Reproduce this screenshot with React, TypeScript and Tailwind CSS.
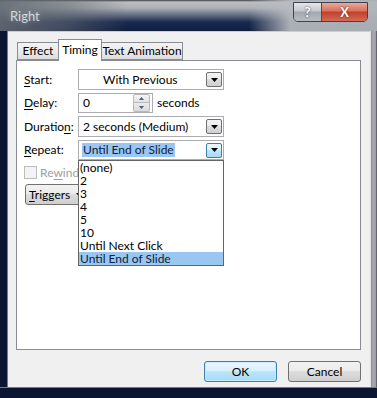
import React from "react";

function Arrow() {
  return (
    <svg width="7" height="4" viewBox="0 0 7 4">
      <path d="M0 0h7L3.5 4z" fill="#000" />
    </svg>
  );
}

function DropBtn({ active }: { active?: boolean }) {
  return active ? (
    <div className="ml-auto mr-[1px] w-[16px] h-[15px] border border-[#3c7fb1] rounded-[2px] bg-[linear-gradient(180deg,#eaf6fd_0%,#d9f0fc_45%,#bee6fd_50%,#a7d9f5_100%)] flex items-center justify-center">
      <Arrow />
    </div>
  ) : (
    <div className="ml-auto mr-[1px] w-[16px] h-[15px] border border-[#707070] rounded-[2px] bg-[linear-gradient(180deg,#f2f2f2_0%,#ebebeb_45%,#dddddd_50%,#cfcfcf_100%)] flex items-center justify-center">
      <Arrow />
    </div>
  );
}

const items = ["(none)", "2", "3", "4", "5", "10", "Until Next Click", "Until End of Slide"];

export default function App() {
  return (
    <div className="w-[377px] h-[398px] flex flex-col bg-[#0c1531] overflow-hidden font-['Lato',sans-serif] text-[12px] text-black select-none">
      {/* Title bar */}
      <div className="h-[31px] shrink-0 flex items-start justify-between bg-[linear-gradient(90deg,rgba(100,106,114,0.9)_0%,rgba(100,106,114,0.55)_18%,rgba(100,106,114,0)_34%,rgba(150,155,162,0)_66%,rgba(184,188,193,0.92)_77%,rgba(176,181,186,0.95)_100%),linear-gradient(180deg,#3a3d42_0px,#bcc0c4_2px,#adb1b6_8px,#5a647a_16px,#1a2a50_22px,#0f1d3d_31px)]">
        <div className="ml-[10px] mt-[8px] text-[13px] leading-[16px] text-[#d4d8dc] [text-shadow:0_0_6px_rgba(255,255,255,0.35)]">
          Right
        </div>
        <div className="mt-[2px] mr-[9px] flex border border-[#3c4350] rounded-b-[5px] overflow-hidden">
          <div className="w-[28px] h-[18px] flex items-center justify-center border-r border-[#4a505a] bg-[linear-gradient(180deg,#e4e7ea_0%,#c4c8cd_45%,#a3a8ae_50%,#b8bcc1_100%)] text-white font-bold text-[13px] leading-none [text-shadow:0_0_2px_#333]">
            ?
          </div>
          <div className="w-[45px] h-[18px] flex items-center justify-center bg-[linear-gradient(180deg,#eba99b_0%,#d7705c_45%,#c0402a_50%,#d36b55_100%)] text-white font-bold text-[13px] leading-none [text-shadow:0_0_2px_#5a1a10]">
            X
          </div>
        </div>
      </div>

      {/* Body */}
      <div className="flex h-[356px] shrink-0">
        <div className="w-[8px] bg-[#0c1531] border-r border-[#9aa6c0]/70" />
        <div className="flex-1 bg-[#f0f0f0] border-t border-[#c9ced6] pl-[8px] pr-[9px] pt-[7px] flex flex-col">
          {/* Tabs */}
          <div className="relative z-10 flex items-end h-[22px] pl-[1px]">
            <div className="w-[41px] h-[18px] mb-[1px] border border-r-0 border-[#898c95] bg-[linear-gradient(180deg,#f3f3f3_0%,#ebebeb_50%,#dddddd_100%)] flex items-center justify-center leading-[16px] text-[12px]">
              Effect
            </div>
            <div className="w-[44px] h-[22px] border border-b-0 border-[#898c95] bg-white flex items-start justify-center pt-[2px] leading-[16px] text-[12px]">
              Timing
            </div>
            <div className="w-[81px] h-[18px] mb-[1px] border border-l-0 border-[#898c95] bg-[linear-gradient(180deg,#f3f3f3_0%,#ebebeb_50%,#dddddd_100%)] flex items-center justify-center leading-[16px] text-[12px]">
              Text Animation
            </div>
          </div>
          {/* Panel */}
          <div className="relative mt-[-1px] h-[290px] border border-[#898c95] bg-white pt-[8px] pl-[7px] flex flex-col">
            {/* Start */}
            <div className="flex items-center h-[21px]">
              <div className="w-[54px]">
                <span className="underline underline-offset-2">S</span>tart:
              </div>
              <div className="w-[146px] h-[21px] border border-[#abadb3] bg-white flex items-center">
                <span className="pl-[24px]">With Previous</span>
                <DropBtn />
              </div>
            </div>
            {/* Delay */}
            <div className="flex items-center h-[20px] mt-[3px]">
              <div className="w-[54px]">
                <span className="underline underline-offset-2">D</span>elay:
              </div>
              <div className="w-[75px] h-[20px] border border-[#abadb3] bg-white flex items-center">
                <span className="pl-[4px] flex-1">0</span>
                <div className="mr-[2px] w-[17px] h-[18px] flex flex-col">
                  <div className="h-[9px] border border-[#b8b8b8] rounded-t-[2px] bg-[linear-gradient(180deg,#f5f5f5,#e2e2e2)] flex items-center justify-center">
                    <svg width="5" height="3" viewBox="0 0 5 3">
                      <path d="M0 3h5L2.5 0z" fill="#4a5a7a" />
                    </svg>
                  </div>
                  <div className="h-[9px] border border-t-0 border-[#b8b8b8] rounded-b-[2px] bg-[linear-gradient(180deg,#ececec,#dadada)] flex items-center justify-center">
                    <svg width="5" height="3" viewBox="0 0 5 3">
                      <path d="M0 0h5L2.5 3z" fill="#4a5a7a" />
                    </svg>
                  </div>
                </div>
              </div>
              <span className="ml-[4px]">seconds</span>
            </div>
            {/* Duration */}
            <div className="flex items-center h-[21px] mt-[3px]">
              <div className="w-[54px]">
                Duratio<span className="underline underline-offset-2">n</span>:
              </div>
              <div className="w-[146px] h-[21px] border border-[#abadb3] bg-white flex items-center">
                <span className="pl-[4px]">2 seconds (Medium)</span>
                <DropBtn />
              </div>
            </div>
            {/* Repeat */}
            <div className="flex items-center h-[20px] mt-[3px]">
              <div className="w-[54px]">
                <span className="underline underline-offset-2">R</span>epeat:
              </div>
              <div className="relative w-[146px] h-[20px] border border-[#abadb3] bg-white flex items-center">
                <span className="ml-[3px] px-[1px] h-[14px] leading-[14px] bg-[#99c7f2] text-[#102040]">
                  Until End of Slide
                </span>
                <DropBtn active />
                {/* dropdown list */}
                <div className="absolute left-[-1px] top-[19px] z-20 w-[146px] border border-[#646464] bg-white flex flex-col">
                  {items.map((t, i) => (
                    <div
                      key={t}
                      className={
                        i === items.length - 1
                          ? "h-[13px] leading-[13px] pl-[1px] bg-[#99c7f2] text-[#102040]"
                          : "h-[13px] leading-[13px] pl-[1px]"
                      }
                    >
                      {t}
                    </div>
                  ))}
                </div>
              </div>
            </div>
            {/* Rewind */}
            <div className="flex items-center h-[13px] mt-[6px]">
              <div className="w-[13px] h-[13px] border border-[#bcbcbc] bg-[#f4f4f4]" />
              <span className="ml-[3px] text-[#a0a0a0] whitespace-nowrap">
                Re<span className="underline underline-offset-2">w</span>ind
              </span>
            </div>
            {/* Triggers */}
            <div className="mt-[5px] ml-[1px] w-[80px] h-[21px] rounded-[3px] border border-[#707070] bg-[linear-gradient(180deg,#f2f2f2_0%,#ebebeb_45%,#dddddd_50%,#cfcfcf_100%)] flex items-center pl-[3px]">
              <span>
                <span className="underline underline-offset-2">T</span>riggers
              </span>
              <span className="ml-[6px]">
                <Arrow />
              </span>
            </div>
          </div>
          {/* Buttons */}
          <div className="mt-[11px] flex justify-end gap-[11px]">
            <div className="w-[73px] h-[21px] rounded-[3px] border border-[#3c7fb1] bg-[linear-gradient(180deg,#eaf6fd_0%,#d9f0fc_45%,#bee6fd_50%,#a7d9f5_100%)] shadow-[inset_0_0_0_1px_#c8eaff] flex items-center justify-center">
              OK
            </div>
            <div className="w-[73px] h-[21px] rounded-[3px] border border-[#707070] bg-[linear-gradient(180deg,#f2f2f2_0%,#ebebeb_45%,#dddddd_50%,#cfcfcf_100%)] flex items-center justify-center">
              Cancel
            </div>
          </div>
        </div>
        <div className="w-[7px] border-l border-[#e0e2e4] bg-[linear-gradient(90deg,#8d9196_0%,#a8acb1_40%,#9a9ea3_80%,#3a3e46_100%)]" />
      </div>
      {/* Bottom frame */}
      <div className="flex-1 bg-[#0c1531] border-t border-[#9aa6c0]/70" />
    </div>
  );
}
